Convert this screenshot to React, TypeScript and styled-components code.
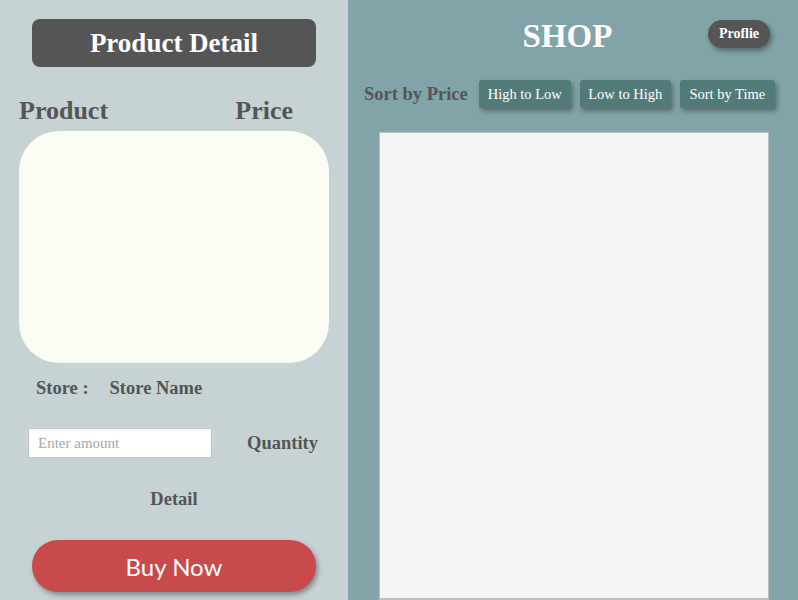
import React from "react";
import styled, { createGlobalStyle } from "styled-components";

const Global = createGlobalStyle`
  html, body { margin: 0; padding: 0; }
  body { font-family: "Liberation Serif", "DejaVu Serif", serif; }
  * { box-sizing: border-box; }
`;

const Page = styled.div`
  display: flex;
  width: 798px;
  height: 600px;
  overflow: hidden;
`;

const LeftPanel = styled.aside`
  width: 349px;
  background: #c6d2d4;
  border-right: 1px solid #8aa4a8;
  display: flex;
  flex-direction: column;
  padding: 19px 19px 0 19px;
`;

const TitleBar = styled.h1`
  margin: 0 13px;
  height: 48px;
  background: #555555;
  border-radius: 8px;
  color: #ffffff;
  font-size: 27px;
  font-weight: bold;
  display: flex;
  align-items: center;
  justify-content: center;
`;

const HeadRow = styled.div`
  display: flex;
  justify-content: space-between;
  margin-top: 29px;
  padding-right: 36px;
  height: 30px;
  align-items: center;
`;

const Heading = styled.span`
  font-size: 26px;
  font-weight: bold;
  color: #555555;
`;

const ImageBox = styled.div`
  margin-top: 5px;
  width: 310px;
  height: 232px;
  background: #fbfcf4;
  border-radius: 40px;
`;

const StoreRow = styled.div`
  display: flex;
  gap: 21px;
  margin: 15px 0 0 17px;
  height: 20px;
  align-items: center;
`;

const Label = styled.span`
  font-size: 18.5px;
  font-weight: bold;
  color: #555555;
`;

const QtyRow = styled.div`
  display: flex;
  align-items: center;
  margin: 30px 0 0 9px;
  height: 30px;
`;

const AmountInput = styled.input`
  width: 184px;
  height: 30px;
  border: 1px solid #c8c8c8;
  border-radius: 2px;
  background: #ffffff;
  padding: 0 9px;
  font-family: "Liberation Serif", serif;
  font-size: 15px;
  outline: none;
  &::placeholder { color: #a8a8a8; }
`;

const QtyLabel = styled(Label)`
  margin-left: 35px;
`;

const DetailRow = styled.div`
  text-align: center;
  margin-top: 29px;
  height: 24px;
  display: flex;
  align-items: center;
  justify-content: center;
`;

const BuyButton = styled.button`
  margin: 29px 13px 0;
  height: 52px;
  border: none;
  border-radius: 26px;
  background: #c84b4c;
  color: #ffffff;
  font-family: Lato, "Open Sans", sans-serif;
  font-size: 24px;
  box-shadow: 2px 3px 5px rgba(0, 0, 0, 0.35);
`;

const RightPanel = styled.main`
  flex: 1;
  background: #82a3a7;
  display: flex;
  flex-direction: column;
`;

const TopBar = styled.div`
  display: flex;
  align-items: center;
  height: 48px;
  margin-top: 12px;
  position: relative;
  justify-content: center;
`;

const Shop = styled.h2`
  margin: 0 12px 0 0;
  color: #ffffff;
  font-size: 33px;
  font-weight: bold;
`;

const ProfileButton = styled.button`
  position: absolute;
  right: 28px;
  top: 8px;
  width: 62px;
  height: 28px;
  border: none;
  border-radius: 14px;
  background: #555555;
  color: #ffffff;
  font-family: "Liberation Serif", serif;
  font-size: 14px;
  font-weight: bold;
  box-shadow: 2px 3px 5px rgba(0, 0, 0, 0.35);
`;

const SortBar = styled.div`
  display: flex;
  align-items: center;
  margin: 20px 0 0 15px;
  height: 28px;
`;

const SortLabel = styled(Label)`
  margin-right: 11px;
`;

const SortButton = styled.button<{ $w: number }>`
  width: ${(p) => p.$w}px;
  height: 28px;
  margin-right: 9px;
  border: none;
  border-radius: 3px;
  background: #517a78;
  color: #ffffff;
  font-family: "Liberation Serif", serif;
  font-size: 14.5px;
  box-shadow: 2px 3px 5px rgba(0, 0, 0, 0.35);
`;

const ListBox = styled.div`
  margin: 24px 0 0 30px;
  width: 390px;
  flex: 1;
  background: #f4f4f4;
  border: 1px solid #bdbdbd;
  border-bottom-width: 2px;
`;

export default function App() {
  return (
    <>
      <Global />
      <Page>
        <LeftPanel>
          <TitleBar>Product Detail</TitleBar>
          <HeadRow>
            <Heading>Product</Heading>
            <Heading>Price</Heading>
          </HeadRow>
          <ImageBox />
          <StoreRow>
            <Label>Store :</Label>
            <Label>Store Name</Label>
          </StoreRow>
          <QtyRow>
            <AmountInput placeholder="Enter amount" />
            <QtyLabel>Quantity</QtyLabel>
          </QtyRow>
          <DetailRow>
            <Label>Detail</Label>
          </DetailRow>
          <BuyButton>Buy Now</BuyButton>
        </LeftPanel>
        <RightPanel>
          <TopBar>
            <Shop>SHOP</Shop>
            <ProfileButton>Proflie</ProfileButton>
          </TopBar>
          <SortBar>
            <SortLabel>Sort by Price</SortLabel>
            <SortButton $w={92}>High to Low</SortButton>
            <SortButton $w={91}>Low to High</SortButton>
            <SortButton $w={95}>Sort by Time</SortButton>
          </SortBar>
          <ListBox />
        </RightPanel>
      </Page>
    </>
  );
}
